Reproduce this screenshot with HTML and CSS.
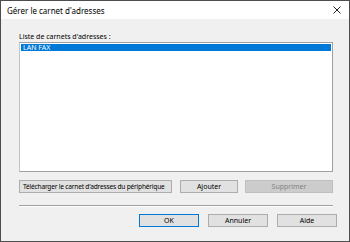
FILE: index.html
```html
<!DOCTYPE html>
<html lang="fr">
<head>
<meta charset="UTF-8" />
<title>Gérer le carnet d'adresses</title>
<link rel="stylesheet" href="styles.css">
</head>
<body>

<div class="dialog">
  <div class="title-bar">
    <span class="title-text">Gérer le carnet d'adresses</span>
    <svg class="close-icon" width="8" height="8" viewBox="0 0 8 8"><path d="M0.5 0.5 L7.5 7.5 M7.5 0.5 L0.5 7.5" stroke="#222" stroke-width="1"/></svg>
  </div>

  <div class="dialog-body">
    <div class="list-label">Liste de carnets d'adresses :</div>
    <div class="list-box">
      <div class="list-item selected">LAN FAX</div>
    </div>

    <div class="action-row">
      <button class="btn btn-download">Télécharger le carnet d'adresses du périphérique</button>
      <button class="btn btn-add">Ajouter</button>
      <button class="btn btn-remove" disabled>Supprimer</button>
    </div>

    <div class="separator"></div>
  </div>

  <!-- boutons du bas -->
  <div class="footer-row">
    <button class="btn btn-footer btn-default">OK</button>
    <button class="btn btn-footer">Annuler</button>
    <button class="btn btn-footer">Aide</button>
  </div>
</div>

</body>
</html>
```

FILE: styles.css
```css
body { margin: 0; padding: 0; background: #fff; font-family: "Noto Sans", "Open Sans", sans-serif; }
.dialog { width: 350px; height: 242px; box-sizing: border-box; border: 1px solid #4d4d4d; background: #f0f0f0; display: flex; flex-direction: column; }
.title-bar { height: 18px; background: #fff; display: flex; align-items: center; justify-content: space-between; padding: 0 8px 0 6px; }
.title-text { font-size: 8px; color: #000; }
.close-icon { display: block; }
.dialog-body { padding: 13px 16px 0 18px; }
.list-label { font-size: 7px; line-height: 9px; height: 10px; color: #000; }
.list-box { height: 130px; box-sizing: border-box; border: 1px solid #a0a0a0; border-left-color: #c4c4c8; background: #fff; padding: 1px; }
.list-item { font-size: 7px; line-height: 7px; height: 7px; padding-left: 2px; }
.list-item.selected { background: #0078d7; color: #fff; }
.action-row { display: flex; margin-top: 8px; }
.btn { font-family: inherit; font-size: 7px; height: 13px; padding: 0; box-sizing: border-box; border: 1px solid #adadad; background: #e1e1e1; color: #000; line-height: 11px; white-space: nowrap; overflow: hidden; }
.btn-download { width: 153px; font-size: 6.6px; letter-spacing: -0.2px; text-align: left; padding-left: 3px; }
.btn-add { width: 58px; margin-left: 8px; }
.btn-remove { width: 88px; margin-left: 7px; background: #cccccc; border-color: #bfbfbf; color: #838383; }
.separator { height: 1px; background: #a0a0a0; margin-top: 12px; border-bottom: 1px solid #fff; }
.footer-row { display: flex; justify-content: flex-end; gap: 9px; padding: 7px 12px 0 0; }
.btn-footer { width: 60px; }
.btn-default { border-color: #0078d7; }
```
